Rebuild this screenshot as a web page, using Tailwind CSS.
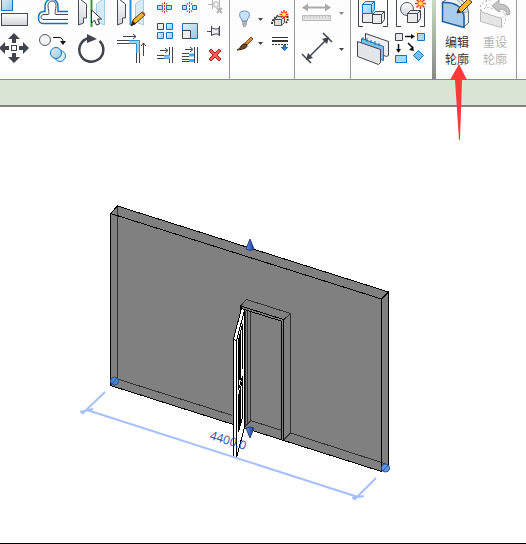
<!DOCTYPE html>
<html lang="zh-CN">
<head>
  <meta charset="utf-8">
  <meta name="viewport" content="width=device-width,initial-scale=1">
  <title>编辑轮廓</title>
  <script src="https://cdn.jsdelivr.net/npm/@tailwindcss/browser@4"></script>
</head>
<body class="min-h-screen flex flex-col bg-white text-xs font-['Noto_Sans_CJK_SC',sans-serif]">

  <!-- shared gradients -->
  <svg class="absolute" width="0" height="0" aria-hidden="true">
    <defs>
      <linearGradient id="grey" x1="0" y1="0" x2="0" y2="1"><stop offset="0" stop-color="#fff"/><stop offset="1" stop-color="#cfd2d8"/></linearGradient>
      <linearGradient id="blue" x1="0" y1="0" x2="1" y2="1"><stop offset="0" stop-color="#e3f2fa"/><stop offset="1" stop-color="#8cc9ee"/></linearGradient>
      <linearGradient id="cone" x1="0" y1="0" x2="1" y2="0"><stop offset="0" stop-color="#6490e8"/><stop offset="1" stop-color="#1c3a94"/></linearGradient>
    </defs>
  </svg>

  <!-- ───────── RIBBON ────────────────────────────────────────── -->
  <header class="relative flex h-20 border-b border-[#55b530] bg-linear-to-b from-[#fcfcfc] to-white">

    <!-- modify -->
    <section class="flex w-[230px] border-r border-[#999]">
      <div class="grid grid-cols-[33px_38px_38px_40px] grid-rows-[30px_36px] content-start">
        <button aria-label="对齐"><svg class="block" width="33" height="30" viewBox="0 0 33 30"><rect x="1.500" y="-4" width="11" height="14.500" fill="url(#blue)" stroke="#1872b8"/><rect x="1.500" y="13.500" width="26" height="12" fill="url(#grey)" stroke="#444a58"/></svg></button>
        <button aria-label="偏移"><svg class="block" width="38" height="30" viewBox="33 0 38 30" fill="none"><path d="M68 20.500H44c-4 0-4-5 0-5h4c2 0 0-5 0-9 0-6 8-6 8 0 0 4-2 9 0 9h12" transform="translate(0 -1)" stroke="#444a58"/><path d="M68 14.500H56" stroke="#444a58"/><path d="M68 23.500H43c-6 0-6-11 0-12h2V6c0-9 13-9 13 0v5.500h10" stroke="#1872b8" stroke-width="1.500"/></svg></button>
        <button aria-label="镜像 - 拾取轴"><svg class="block" width="38" height="30" viewBox="71 0 38 30"><path d="M78.500 -2l8 6v14h-3v5l-5 2z" fill="url(#grey)" stroke="#444a58"/><path d="M104.500 -2l-8 6v14h3v5l5 2z" fill="#d6ebf7" stroke="#a0cce8"/><path d="M91.500 0v27" stroke="#3a9a35" stroke-width="2"/><path d="M91.500 10v13l3-3 2 5 3-1-2-5h4z" fill="#fff" stroke="#333"/></svg></button>
        <button aria-label="镜像 - 绘制轴"><svg class="block" width="40" height="30" viewBox="109 0 40 30"><path d="M117.500 -2l8 6v14h-3v5l-5 2z" fill="url(#grey)" stroke="#444a58"/><path d="M143.500 -2l-8 6v14h3v5l5 2z" fill="#d6ebf7" stroke="#a0cce8"/><path d="M130.500 0v25" stroke="#2d8fd0" stroke-width="2"/><path d="M131 26l2-6 9-8 3 3-9 8z" fill="#f7b62c" stroke="#533516"/><path d="M131 26l2-5 3 3z" fill="#222"/><path d="M142 12l3 3" stroke="#b04a38" stroke-width="2"/></svg></button>
        <button aria-label="移动"><svg class="block" width="33" height="36" viewBox="0 30 33 36"><path d="M14 33l6 6h-4v4h-4v-4H8zM14 63l6-6h-4v-4h-4v4H8zM-1 48l6-6v4h4v4H5v4zM29 48l-6-6v4h-4v4h4v4z" fill="#40444e"/><rect x="11.500" y="45.500" width="5" height="5" fill="#fff" stroke="#40444e"/></svg></button>
        <button aria-label="复制"><svg class="block" width="38" height="36" viewBox="33 30 38 36"><circle cx="45" cy="40" r="5.500" fill="#f3f3f5" stroke="#555b68"/><path d="M53 37.500h6q4 0 4 5" fill="none" stroke="#111"/><path d="M60 41h6l-3 4z" fill="#111"/><circle cx="60" cy="56" r="5.500" fill="#d8edfa" stroke="#2d7fbd"/><circle cx="56" cy="53" r="5.500" fill="url(#blue)" stroke="#1872b8"/></svg></button>
        <button aria-label="旋转"><svg class="block" width="38" height="36" viewBox="71 30 38 36"><path d="M99.500 41a12 12 0 1 1-10.500-3" fill="none" stroke="#40444e" stroke-width="2.500"/><path d="M87 34l10 5-10 4z" fill="#40444e"/></svg></button>
        <button aria-label="修剪/延伸为角"><svg class="block" width="40" height="36" viewBox="109 30 40 36" fill="none"><path d="M123 36.500h13M133 34l3 2.500-3 2.500M143.500 56V43M141 46l2.500-3 2.500 3M117 40.500h12M117 43.500h12M136.500 51v12M139.500 51v12" stroke="#40444e"/><path d="M129 42h9v11" stroke="#9dd2f5" stroke-width="2"/><path d="M129 40.500h10.500V53M129 43.500h7.500V53" stroke="#2d8fd0"/></svg></button>
      </div>
      <div class="grid grid-cols-[28px_25px_25px] grid-rows-[18px_26px_22px] content-start">
        <button aria-label="拆分图元"><svg class="block" width="28" height="18" viewBox="149 0 28 18"><path d="M157.500 5.500h5v4h-5zM166.500 5.500h5v4h-5z" fill="#b8def3" stroke="#1872b8"/><path d="M164.500 2v12M162 3l1 2M167 3l-1 2M162 12l1-2M167 12l-1-2" stroke="#c33" stroke-dasharray="2 1"/></svg></button>
        <button aria-label="用间隙拆分"><svg class="block" width="25" height="18" viewBox="177 0 25 18"><path d="M182.500 5.500h4v4h-4zM192.500 5.500h4v4h-4z" fill="#b8def3" stroke="#1872b8"/><path d="M189.500 2v12M187 3l1 2M192 3l-1 2M187 12l1-2M192 12l-1-2" stroke="#c33" stroke-dasharray="2 1"/></svg></button>
        <button aria-label="解锁"><svg class="block" width="25" height="18" viewBox="202 0 25 18" fill="none" stroke="#b5b5b5"><path d="M208 4.500h4M212.500 0v9M214 2h4v5h-4zM219.500 0v9"/><path d="M217 8l5 5M222 8l-5 5" stroke-width="2"/></svg></button>
        <button aria-label="阵列"><svg class="block" width="28" height="26" viewBox="149 18 28 26"><g fill="url(#blue)" stroke="#1872b8"><path d="M166.500 23.500h6v6h-6z"/><path d="M157.500 32.500h6v6h-6z"/><path d="M166.500 32.500h6v6h-6z"/></g><path d="M157.500 23.500h6v6h-6z" fill="#eee" stroke="#40444e"/></svg></button>
        <button aria-label="缩放"><svg class="block" width="25" height="26" viewBox="177 18 25 26"><path d="M182.500 23.500h15v15h-15z" fill="url(#blue)" stroke="#1872b8"/><path d="M182.500 30.500h8v8h-8z" fill="#eee" stroke="#40444e"/></svg></button>
        <button aria-label="锁定"><svg class="block" width="25" height="26" viewBox="202 18 25 26" fill="#eee" stroke="#444a58"><path d="M207 31.500h4M211.500 26v10M212 28l3 1h2l2-1v7l-2-1h-2l-3 1M219.500 26v10"/></svg></button>
        <button aria-label="修剪/延伸单个图元"><svg class="block" width="28" height="22" viewBox="149 44 28 22" fill="none" stroke="#40444e"><path d="M160 50.500h7M165 48l3 2.500-3 2.500M157 55.500h7M157 58.500h7M169.500 47v16M172.500 47v16"/><path d="M164 57h6" stroke="#4aa8ec" stroke-width="4"/><path d="M164 57h6" stroke="#a9d8f8"/></svg></button>
        <button aria-label="修剪/延伸多个图元"><svg class="block" width="25" height="22" viewBox="177 44 25 22" fill="none" stroke="#40444e"><path d="M185 49.500h7M190 47l3 2.500-3 2.500M182 53.500h7M182 56.500h7M182 59.500h7M182 61.500h7M194.500 47v16M197.500 47v16"/><path d="M189 55h5M189 60.500h5" stroke="#4aa8ec" stroke-width="3"/></svg></button>
        <button aria-label="删除"><svg class="block" width="25" height="22" viewBox="202 44 25 22"><path d="M209 51l2-2 4 4 4-4 2 2-4 4 4 4-2 2-4-4-4 4-2-2 4-4z" fill="#ff5b55" stroke="#b41f20"/></svg></button>
      </div>
    </section>

    <!-- view -->
    <section class="grid grid-cols-[38px_26px] grid-rows-[32px_28px] content-start w-[65px] border-r border-[#999]">
      <button aria-label="隐藏"><svg class="block" width="38" height="32" viewBox="230 0 38 32"><path d="M242 21q0-2-2-4-2-6 4.500-6t4.500 6q-2 2-2 4z" fill="#c7e2fb" stroke="#6594c8"/><path d="M242 22h5M242 24h5M243 26h3" stroke="#666"/><path d="M258 18h5l-2.500 3z" fill="#444"/></svg></button>
      <button aria-label="显示隐藏图元"><svg class="block" width="26" height="32" viewBox="268 0 26 32"><path d="M272 24q0-5 7-9M287 16q2 3-1 7" fill="none" stroke="#333" stroke-width="2" stroke-dasharray="2 1"/><path d="M274.500 19.500l3-3h7v6l-3 3h-7zM274.500 19.500h7v6M281.500 19.500l3-3" fill="#ddd" stroke="#555"/><path d="M284 10v9M279.500 14.500h9M281 11.500l6 6M287 11.500l-6 6" stroke="#e63a18" stroke-width="1.500"/><circle cx="284" cy="14.500" r="2" fill="#ffe350"/></svg></button>
      <button aria-label="替换图形"><svg class="block" width="38" height="28" viewBox="230 32 38 28"><path d="M245 43l6-6 2 2-6 6z" fill="#d58a42" stroke="#8f4d1b"/><path d="M237 50q3-1 4-4 3-4 6-1 1 4-10 5z" fill="#6d4526" stroke="#3e2614"/><path d="M258 42h5l-2.500 3z" fill="#444"/></svg></button>
      <button aria-label="线处理"><svg class="block" width="26" height="28" viewBox="268 32 26 28"><path d="M272 37.500h16" stroke="#333"/><path d="M272 41h16" stroke="#333" stroke-width="2"/><path d="M272 44.500h16" stroke="#333" stroke-dasharray="2 1"/><path d="M283.500 45.500h2v2h2l-3 3-3-3h2z" fill="#2f8de0" stroke="#155aa8"/></svg></button>
    </section>

    <!-- measure -->
    <section class="grid grid-rows-[28px_38px] content-start w-14 border-r border-[#999]">
      <button aria-label="测量"><svg class="block" width="55" height="28" viewBox="295 0 55 28"><path d="M306 7.500h21" stroke="#aaa" stroke-width="2"/><path d="M302 7.500l6-4v8zM331 7.500l-6-4v8z" fill="#aaa"/><path d="M302.500 15.500h28v5h-28z" fill="#e3e3e3" stroke="#bbb"/><path d="M304 17h25" stroke="#aaa" stroke-dasharray="1 2"/><path d="M339 12h5l-2.500 3z" fill="#888"/></svg></button>
      <button aria-label="对齐尺寸标注"><svg class="block" width="55" height="38" viewBox="295 28 55 38"><path d="M308 58l19-19M323 33l9 9M302 54l9 9" stroke="#40444e" stroke-width="1.500"/><path d="M306 60l2-7 5 5zM329 37l-7 2 5 5z" fill="#40444e"/><path d="M339 48h5l-2.500 3z" fill="#444"/></svg></button>
    </section>

    <!-- create -->
    <section class="grid grid-cols-[42px_39px] grid-rows-[30px_38px] content-start w-[81px]">
      <button aria-label="创建组"><svg class="block" width="42" height="30" viewBox="351 0 42 30"><path d="M363 26.500h-4.500V0M383 26.500h4.500V0" fill="none" stroke="#40444e"/><g fill="#ebebee" stroke="#40444e"><path d="M362.500 13.500h10v9h-10z"/><path d="M372.500 14.500l3-3h9v8l-3 4h-9z"/><path d="M372.500 14.500h9v9M381.500 14.500l3-3" fill="none"/></g><path d="M362.500 4.500l3-3h9v8l-3 4h-9z" fill="url(#blue)" stroke="#1872b8"/><path d="M362.500 4.500h9v9M371.500 4.500l3-3" fill="none" stroke="#1872b8"/></svg></button>
      <button aria-label="创建类似实例"><svg class="block" width="39" height="30" viewBox="393 0 39 30"><path d="M401 26.500h-4.500V0M420 26.500h4.500V8" fill="none" stroke="#40444e"/><circle cx="407" cy="9" r="6.500" fill="url(#grey)" stroke="#555b68"/><path d="M407.500 13.500l3-3h10v8l-3 4h-10z" fill="#ebebee" stroke="#40444e"/><path d="M407.500 13.500h10v9M417.500 13.500l3-3" fill="none" stroke="#40444e"/><path d="M420.500 -2v11M415 3.500h11M416.500 -.5l8 8M424.500 -.5l-8 8" stroke="#e63a18" stroke-width="1.500"/><circle cx="420.500" cy="3.500" r="2.500" fill="#ffe350" stroke="#e08b18"/></svg></button>
      <button aria-label="创建部件"><svg class="block" width="42" height="38" viewBox="351 30 42 38"><path d="M365.500 33.500l23 8v14l-2 1-21-8z" fill="#ededf0" stroke="#40444e"/><path d="M361.500 38.500l22 8v14l-22-8z" fill="#79c2f1" stroke="#1872b8"/><path d="M363 37v3M367 38v4M371 40v3M375 41v4M379 43v3" stroke="#1872b8"/><path d="M357.500 41.500l23 8v13l-2 2-21-8z" fill="#e4e5e9" stroke="#40444e"/></svg></button>
      <button aria-label="创建零件"><svg class="block" width="39" height="38" viewBox="393 30 39 38"><path d="M395.500 33.500h7v7h-7z" fill="#e8e8ef" stroke="#40444e"/><g fill="#a9d8f2" stroke="#1872b8"><path d="M417.500 33.500h7v7h-7zM395.500 55.500h11v7h-11z"/><path d="M418.500 50.500l5 5-5 5-5-5z" fill="#7cbdec"/></g><path d="M405 36.500h7M398.500 44v6M408 43l5 5" stroke="#111" stroke-width="1.500"/><path d="M411 34l4 2.500-4 2.500zM396 49h5l-2.500 4zM414 51l-5-1 4-4z" fill="#111"/></svg></button>
    </section>

    <div class="w-1 bg-linear-to-b from-[#c5dcc0] to-[#888]"></div>

    <!-- mode -->
    <section class="flex w-[81px] border-r border-[#999]">
      <button class="flex flex-col items-center w-[42px] text-[#333] leading-[17px]">
        <svg class="block" width="42" height="33" viewBox="436 0 42 33"><path d="M442.500 2l5-3h12q8 4 9 13v11l-5 4" fill="#edf0f3" stroke="#68707c"/><path d="M457 0q7 4 7 13l4-2M464 13v13" fill="none" stroke="#9aa2ac"/><path d="M442.500 2.500q19-1 21.500 14v11l-21.500-6z" fill="#a8cdec" stroke="#1b5e9c" stroke-width="1.500"/><path d="M457 13l2-5 9-9 4 3-10 10z" fill="#f7b62c" stroke="#533516"/><path d="M457 13l1-4 3 3z" fill="#222"/></svg>
        <span>编辑<br>轮廓</span>
      </button>
      <button class="flex flex-col items-center w-[34px] text-[#b5b5b5] leading-[17px]" disabled>
        <svg class="block" width="34" height="33" viewBox="478 0 34 33"><path d="M480.500 11.500l21 7v9l-21-6z" fill="#e5e5e5" stroke="#bbb"/><path d="M480.500 11V5l6-5h6M501.500 18l4-5v9l-4 5M480.500 11l6-4 19 6M486.500 0v7" fill="none" stroke="#bbb" stroke-dasharray="2 2"/><path d="M492 6l7-6v4q11 0 11 10l-3 1q0-6-8-6v3z" fill="#c4c4c4" stroke="#a8a8a8"/></svg>
        <span>重设<br>轮廓</span>
      </button>
    </section>

    <!-- pointer on the edit profile button -->
    <svg class="absolute left-[450px] top-16 z-10 pointer-events-none" width="18" height="77" viewBox="450 64 18 77"><path d="M459 64l8 16h-5l-2 60h-1l-4-60h-5z" fill="#ff3838"/></svg>
  </header>

  <!-- ───────── OPTIONS BAR ───────────────────────────────────── -->
  <div class="h-[27px] border-b-2 border-[#818181] bg-[#d9e4d4]"></div>

  <!-- ───────── 3D VIEW ───────────────────────────────────────── -->
  <main class="flex-1 border-b border-black">
    <svg class="block" width="526" height="436" viewBox="0 107 526 436" aria-label="三维视图">
      <path d="M110.500 213.500l7-7.500 271 86v176l-7 3.500-271-86z" fill="#808080"/>
      <g fill="none" stroke="#333" shape-rendering="crispEdges">
        <path d="M117.500 206v173l115 36.500M110.500 385l7-7"/>
        <path d="M240.500 306l6-6.500 44 14v119.500l91 29.500 7 3M283.500 320l7-6.500M283.500 440l7-7"/>
        <path d="M245.500 311v115M247.500 311v114M250.500 312v108.500l30 9.500M244.500 427l6-6"/>
      </g>
      <g fill="none" stroke="#000" shape-rendering="crispEdges">
        <path d="M110.500 385.500v-172l7-7.500 271 86v176M110.500 213.500l271 85.500v172.500l-271-86M381.500 299l7-7"/>
        <path d="M240.500 310v-4l43 13.500v120M241 308.500l40 12.500v118"/>
      </g>
      <!-- open door leaf -->
      <g fill="#fff" stroke="#000" shape-rendering="crispEdges">
        <path d="M241.500 308l3 2v117l-8 31-3-1V339z"/>
        <path d="M233.500 339l3 2v117M236.500 341l8-31M238.500 340l4-16" fill="none"/>
        <path d="M238.500 340v50M238.500 396v36M242.500 324v45M242.500 378v41M238.500 390l4-14M238.500 396l4-16M238.500 432l4-15" fill="none"/>
        <path d="M240 334v46M240 390v36" stroke-width="2"/>
      </g>
      <!-- dimension -->
      <g fill="none" stroke="#a6c0ff" stroke-width="2">
        <path d="M87 410l271 87M105 392l-23 22M80 412l13-3M376 478l-22 22M352 498l12-2"/>
      </g>
      <text transform="translate(209 439) rotate(17)" class="font-['Open_Sans',sans-serif] text-xs" fill="#1b51b0">4400.0</text>
      <g stroke="#2a4e86"><circle cx="114.500" cy="381" r="4" fill="#4a88d6"/><circle cx="385.500" cy="468" r="4" fill="#5b9df0"/><path d="M112 384l5-6M383 471l5-6"/></g>
      <path d="M250 239l4 10q-4 3-8 0z" fill="url(#cone)" stroke="#263f78"/>
      <path d="M250 438l4-10q-4-2-8 0z" fill="url(#cone)" stroke="#263f78"/>
    </svg>
  </main>
</body>
</html>
